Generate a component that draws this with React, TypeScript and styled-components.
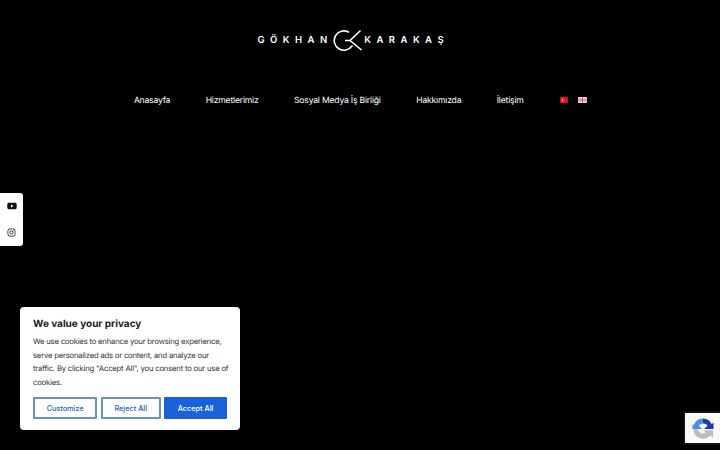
import styled, { createGlobalStyle } from "styled-components";
import { FaInstagram, FaYoutube } from "react-icons/fa";

const navLinks = [
  "Anasayfa",
  "Hizmetlerimiz",
  "Sosyal Medya İş Birliği",
  "Hakkımızda",
  "İletişim",
];

const App = () => {
  return (
    <>
      <GlobalStyle />
      <Page>
        <Header>
          <Logo>
            <LogoWord>GÖKHAN</LogoWord>
            <LogoMark width="30" height="24" viewBox="0 0 30 24" fill="none">
              <path
                d="M15.5 4 A9.7 9.7 0 1 0 19 18"
                stroke="#fff"
                strokeWidth="1.6"
                strokeLinecap="round"
              />
              <path
                d="M12 12.5 L17 12.5 L27.5 2.5 M17 12.5 L28.5 22"
                stroke="#fff"
                strokeWidth="1.6"
              />
            </LogoMark>
            <LogoWord>KARAKAŞ</LogoWord>
          </Logo>
          <Nav>
            {navLinks.map((link) => (
              <NavItem key={link} href="#">
                {link}
              </NavItem>
            ))}
            <Flags>
              <a href="#" aria-label="Türkçe">
                <svg width="8" height="6" viewBox="0 0 8 6">
                  <rect width="8" height="6" fill="#e30a17" />
                  <circle cx="3.2" cy="3" r="1.5" fill="#fff" />
                  <circle cx="3.6" cy="3" r="1.2" fill="#e30a17" />
                </svg>
              </a>
              <a href="#" aria-label="English">
                <svg width="9" height="6" viewBox="0 0 9 6">
                  <rect width="9" height="6" fill="#e9dbe6" />
                  <path d="M0 0 L9 6 M9 0 L0 6" stroke="#d8a0b4" strokeWidth="0.8" />
                  <path d="M4.5 0 V6 M0 3 H9" stroke="#d06080" strokeWidth="1" />
                </svg>
              </a>
            </Flags>
          </Nav>
        </Header>

        <SocialBar>
          <SocialLink href="#" aria-label="YouTube">
            <FaYoutube size={10} />
          </SocialLink>
          <SocialLink href="#" aria-label="Instagram">
            <FaInstagram size={9} />
          </SocialLink>
        </SocialBar>

        <CookieCard>
          <CookieTitle>We value your privacy</CookieTitle>
          <CookieText>
            We use cookies to enhance your browsing experience,
            <br />
            serve personalized ads or content, and analyze our
            <br />
            traffic. By clicking "Accept All", you consent to our use of
            <br />
            cookies.
          </CookieText>
          <CookieButtons>
            <CookieButton>Customize</CookieButton>
            <CookieButton>Reject All</CookieButton>
            <CookieButton $primary>Accept All</CookieButton>
          </CookieButtons>
        </CookieCard>

        <Recaptcha aria-label="reCAPTCHA">
          <svg width="22" height="22" viewBox="0 0 24 24" fill="none">
            <path d="M12 1.5 A10.5 10.5 0 0 0 2 9 L0.5 7.5 L0.5 13 L11 13 L7.5 9.5 A5.5 5.5 0 0 1 12 7 Z" fill="#4a90e2" />
            <path d="M12 1.5 A10.5 10.5 0 0 1 21.5 8 L23.5 6 L23.5 13 L13 13 L17 9.5 A5.5 5.5 0 0 0 12 7 Z" fill="#1c3aa9" />
            <path d="M1 13 L6 13 A6 6 0 0 0 15 17 L12.5 14.5 L23 14.5 L23 23 L20 20 A10.5 10.5 0 0 1 1.5 13 Z" fill="#bdbdbd" />
          </svg>
        </Recaptcha>
      </Page>
    </>
  );
};

const GlobalStyle = createGlobalStyle`
  html, body {
    margin: 0;
    background: #000;
  }
  * {
    box-sizing: border-box;
  }
`;

const Page = styled.div`
  width: 720px;
  height: 450px;
  overflow: hidden;
  background: #000;
  font-family: "Inter", "Liberation Sans", sans-serif;
  text-rendering: geometricPrecision;
`;

const Header = styled.header`
  display: flex;
  flex-direction: column;
  align-items: center;
  padding-top: 28px;
`;

const Logo = styled.div`
  display: flex;
  align-items: center;
  height: 24px;
  margin-right: 19px;
`;

const LogoWord = styled.span`
  color: #fff;
  font-size: 9.5px;
  font-weight: 600;
  letter-spacing: 5.5px;
  margin-right: -5.5px;
`;

const LogoMark = styled.svg`
  margin: 0 1px 0 6px;
`;

const Nav = styled.nav`
  display: flex;
  align-items: center;
  gap: 35.5px;
  margin-top: 39px;
  padding: 1px 0 0 1px;
`;

const NavItem = styled.a`
  color: #fff;
  font-size: 8.6px;
  letter-spacing: -0.2px;
  line-height: 18px;
  text-decoration: none;
  cursor: pointer;
`;

const Flags = styled.div`
  display: flex;
  align-items: center;
  gap: 10px;
  margin: 0 0 2px 1px;

  a {
    display: flex;
  }
`;

const SocialBar = styled.aside`
  position: fixed;
  left: 0;
  top: 193px;
  width: 23px;
  height: 53px;
  display: flex;
  flex-direction: column;
  background: #fff;
  border-radius: 0 3px 3px 0;
`;

const SocialLink = styled.a`
  flex: 1;
  display: flex;
  align-items: center;
  justify-content: center;
  color: #111;
`;

const CookieCard = styled.section`
  position: fixed;
  left: 20px;
  top: 307px;
  width: 220px;
  height: 123px;
  padding: 10px 13px;
  background: #fff;
  border-radius: 4px;
`;

const CookieTitle = styled.h2`
  margin: 0 0 4px;
  color: #212121;
  font-size: 10px;
  font-weight: 700;
  line-height: 14px;
`;

const CookieText = styled.p`
  margin: 0;
  color: #333;
  font-size: 7.7px;
  letter-spacing: -0.2px;
  line-height: 13.6px;
  white-space: nowrap;
`;

const CookieButtons = styled.div`
  display: flex;
  gap: 3.5px;
  margin-top: 8px;
`;

const CookieButton = styled.button<{ $primary?: boolean }>`
  flex: auto;
  height: 22px;
  padding: 0 11px;
  border: 2px solid ${(p) => (p.$primary ? "#1863dc" : "#6d8fc0")};
  border-radius: 1px;
  background: ${(p) => (p.$primary ? "#1863dc" : "#fff")};
  color: ${(p) => (p.$primary ? "#fff" : "#2a62c4")};
  font-family: inherit;
  font-size: 7.3px;
  font-weight: 500;
  white-space: nowrap;
`;

const Recaptcha = styled.div`
  position: fixed;
  left: 685px;
  top: 413px;
  width: 40px;
  height: 30px;
  padding: 4px 0 0 7px;
  background: #f9f9f9;
  box-shadow: 0 0 4px rgba(255, 255, 255, 0.2);
`;

export default App;
